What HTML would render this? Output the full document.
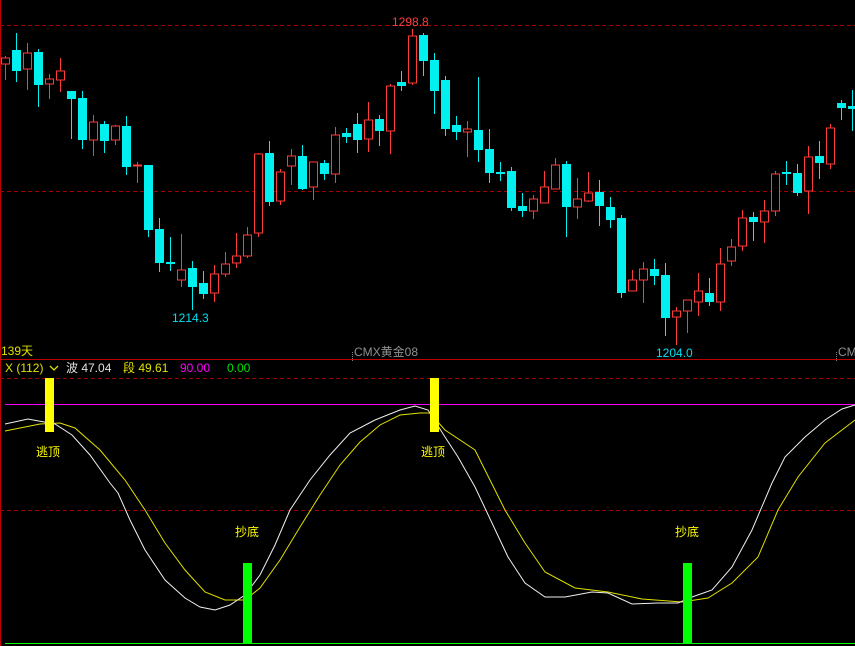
<!DOCTYPE html>
<html><head><meta charset="utf-8"><style>
html,body{margin:0;padding:0;background:#000;width:855px;height:646px;overflow:hidden}
svg{display:block}
text{font-family:"Liberation Sans","Noto Sans CJK SC",sans-serif;font-size:12px}
</style></head><body>
<svg width="855" height="646" viewBox="0 0 855 646" xmlns="http://www.w3.org/2000/svg">
<rect width="855" height="646" fill="#000"/>
<line x1="0.5" y1="0" x2="0.5" y2="646" stroke="#c00000"/>
<line x1="0" y1="25.5" x2="855" y2="25.5" stroke="#a00000" stroke-dasharray="4,3"/>
<line x1="0" y1="191.5" x2="855" y2="191.5" stroke="#a00000" stroke-dasharray="4,3"/>
<line x1="0" y1="359.5" x2="855" y2="359.5" stroke="#c00000"/>
<line x1="0" y1="378.5" x2="855" y2="378.5" stroke="#a00000" stroke-dasharray="4,3"/>
<line x1="0" y1="510.5" x2="855" y2="510.5" stroke="#a00000" stroke-dasharray="4,3"/>
<line x1="5" y1="404.5" x2="855" y2="404.5" stroke="#ff00ff"/>
<line x1="5" y1="643.5" x2="855" y2="643.5" stroke="#00ff00"/>

<g id="c" stroke-width="1">
<!-- red candles -->
<g stroke="#ff3c3c" fill="#000">
<path d="M5.5 56V80M27.5 43V90M49.5 74V99M60.5 58V92M93.5 115V156M115.5 125V145M137.5 162V183M181.5 234V287M214.5 265V302M225.5 252V277M236.5 233V268M247.5 227V258M258.5 153V237M280.5 169V205M291.5 149V185M313.5 162V200M335.5 127V183M368.5 102V152M390.5 84V154M412.5 29V85M467.5 121V157M533.5 195V219M544.5 171V203M555.5 158V189M577.5 178V219M588.5 172V202M632.5 270V291M643.5 262V303M676.5 307V345M687.5 300V333M698.5 273V316M720.5 248V311M731.5 239V266M742.5 210V251M764.5 200V243M775.5 171V216M808.5 146V214M830.5 124V169"/>
<rect x="1.5" y="58" width="8" height="6"/><rect x="23.5" y="53" width="8" height="16"/><rect x="45.5" y="79" width="8" height="5"/><rect x="56.5" y="71" width="8" height="9"/><rect x="89.5" y="122" width="8" height="18"/><rect x="111.5" y="126" width="8" height="14"/><rect x="133.5" y="165" width="8" height="1"/><rect x="177.5" y="270" width="8" height="10"/><rect x="210.5" y="274" width="8" height="19"/><rect x="221.5" y="264" width="8" height="10"/><rect x="232.5" y="256" width="8" height="7"/><rect x="243.5" y="235" width="8" height="21"/><rect x="254.5" y="154" width="8" height="79"/><rect x="276.5" y="172" width="8" height="29"/><rect x="287.5" y="156" width="8" height="10"/><rect x="309.5" y="162" width="8" height="25"/><rect x="331.5" y="135" width="8" height="39"/><rect x="364.5" y="120" width="8" height="19"/><rect x="386.5" y="86" width="8" height="45"/><rect x="408.5" y="36" width="8" height="47"/><rect x="463.5" y="129" width="8" height="3"/><rect x="529.5" y="199" width="8" height="12"/><rect x="540.5" y="187" width="8" height="16"/><rect x="551.5" y="165" width="8" height="24"/><rect x="573.5" y="199" width="8" height="8"/><rect x="584.5" y="193" width="8" height="8"/><rect x="628.5" y="280" width="8" height="11"/><rect x="639.5" y="269" width="8" height="11"/><rect x="672.5" y="311" width="8" height="6"/><rect x="683.5" y="300" width="8" height="11"/><rect x="694.5" y="291" width="8" height="11"/><rect x="716.5" y="264" width="8" height="38"/><rect x="727.5" y="247" width="8" height="14"/><rect x="738.5" y="218" width="8" height="28"/><rect x="760.5" y="211" width="8" height="11"/><rect x="771.5" y="174" width="8" height="37"/><rect x="804.5" y="157" width="8" height="34"/><rect x="826.5" y="128" width="8" height="36"/>
</g>
<!-- cyan candles -->
<g stroke="#00f0f0">
<path d="M16.5 33V82M38.5 49V107M71.5 91V139M82.5 91V149M104.5 121V153M126.5 116V175M148.5 165V237M159.5 218V272M170.5 237V271M192.5 261V310M203.5 271V299M269.5 141V206M302.5 145V190M324.5 160V180M346.5 128V143M357.5 113V153M379.5 115V146M401.5 71V91M423.5 33V76M434.5 53V114M445.5 76V136M456.5 116V140M478.5 77V162M489.5 129V183M500.5 162V181M511.5 167V211M522.5 193V217M566.5 161V237M599.5 180V226M610.5 197V228M621.5 215V298M654.5 259V285M665.5 263V336M709.5 278V306M753.5 212V241M786.5 161V185M797.5 164V196M819.5 141V179M841.5 100V120M852.5 90V131"/>
</g>
<g fill="#00f0f0">
<rect x="12" y="50" width="9" height="21"/><rect x="34" y="52" width="9" height="33"/><rect x="67" y="91" width="9" height="8"/><rect x="78" y="98" width="9" height="42"/><rect x="100" y="124" width="9" height="17"/><rect x="122" y="126" width="9" height="41"/><rect x="144" y="165" width="9" height="65"/><rect x="155" y="229" width="9" height="34"/><rect x="166" y="262" width="9" height="2"/><rect x="188" y="268" width="9" height="19"/><rect x="199" y="283" width="9" height="11"/><rect x="265" y="153" width="9" height="49"/><rect x="298" y="156" width="9" height="33"/><rect x="320" y="163" width="9" height="11"/><rect x="342" y="133" width="9" height="4"/><rect x="353" y="124" width="9" height="16"/><rect x="375" y="119" width="9" height="12"/><rect x="397" y="82" width="9" height="4"/><rect x="419" y="35" width="9" height="26"/><rect x="430" y="60" width="9" height="31"/><rect x="441" y="80" width="9" height="49"/><rect x="452" y="125" width="9" height="7"/><rect x="474" y="130" width="9" height="20"/><rect x="485" y="149" width="9" height="24"/><rect x="496" y="172" width="9" height="2"/><rect x="507" y="171" width="9" height="37"/><rect x="518" y="206" width="9" height="5"/><rect x="562" y="164" width="9" height="43"/><rect x="595" y="192" width="9" height="14"/><rect x="606" y="207" width="9" height="13"/><rect x="617" y="218" width="9" height="75"/><rect x="650" y="269" width="9" height="7"/><rect x="661" y="275" width="9" height="43"/><rect x="705" y="293" width="9" height="9"/><rect x="749" y="217" width="9" height="5"/><rect x="782" y="172" width="9" height="2"/><rect x="793" y="173" width="9" height="20"/><rect x="815" y="156" width="9" height="7"/><rect x="837" y="103" width="9" height="5"/><rect x="848" y="106" width="9" height="3"/>
</g>
</g>

<text x="392" y="26" fill="#ff3c3c" font-size="13">1298.8</text>
<text x="172" y="322" fill="#00e0f0" font-size="13">1214.3</text>
<text x="656" y="357" fill="#00e0f0" font-size="13">1204.0</text>
<text x="1" y="355" fill="#e0e000" font-size="12">139天</text>
<line x1="352.5" y1="352" x2="352.5" y2="362" stroke="#808080" stroke-dasharray="1,1"/>
<text x="354" y="356" fill="#909090" font-size="11">CMX黄金08</text>
<line x1="836.5" y1="352" x2="836.5" y2="362" stroke="#808080" stroke-dasharray="1,1"/>
<text x="838" y="356" fill="#909090" font-size="11">CMX</text>

<text x="5" y="372" fill="#e0e000" font-size="12">X (112)</text>
<path d="M50 366l4 4 4-4" stroke="#e0e000" fill="none" stroke-width="1.3"/>
<text x="66" y="372" fill="#e0e0e0" font-size="12">波 47.04</text>
<text x="123" y="372" fill="#e0e000" font-size="12">段 49.61</text>
<text x="180" y="372" fill="#ff00ff" font-size="12">90.00</text>
<text x="227" y="372" fill="#00e000" font-size="12">0.00</text>

<polyline fill="none" stroke="#e0e000" stroke-width="1" points="5,431 40,424 60,423 75,428 100,450 125,480 145,510 165,543 185,570 205,592 225,600 245,600 260,588 280,560 300,527 320,495 340,465 360,442 380,425 400,415 420,413 430,413 445,430 475,450 505,510 525,543 545,572 575,588 608,592 642,599 682,602 708,598 732,583 758,557 778,510 798,477 825,443 855,420"/>
<polyline fill="none" stroke="#f0f0f0" stroke-width="1" points="5,424 28,419 55,424 72,435 90,455 110,483 118,493 130,520 145,550 165,580 185,598 200,607 215,610 230,605 245,595 260,575 275,545 290,510 310,480 330,455 350,433 375,420 400,410 415,406 428,410 445,437 458,457 475,487 492,523 508,557 525,583 545,597 565,597 592,592 608,593 632,604 658,603 678,603 692,597 712,590 732,567 752,530 772,483 785,457 805,437 825,420 842,409 855,405"/>

<rect x="45" y="378" width="9" height="54" fill="#ffff00"/>
<rect x="430" y="378" width="9" height="54" fill="#ffff00"/>
<rect x="243" y="563" width="9" height="80" fill="#00ff00"/>
<rect x="683" y="563" width="9" height="80" fill="#00ff00"/>
<text x="36" y="456" fill="#ffff00" font-size="12">逃顶</text>
<text x="421" y="456" fill="#ffff00" font-size="12">逃顶</text>
<text x="235" y="536" fill="#ffff00" font-size="12">抄底</text>
<text x="675" y="536" fill="#ffff00" font-size="12">抄底</text>
</svg>
</body></html>
